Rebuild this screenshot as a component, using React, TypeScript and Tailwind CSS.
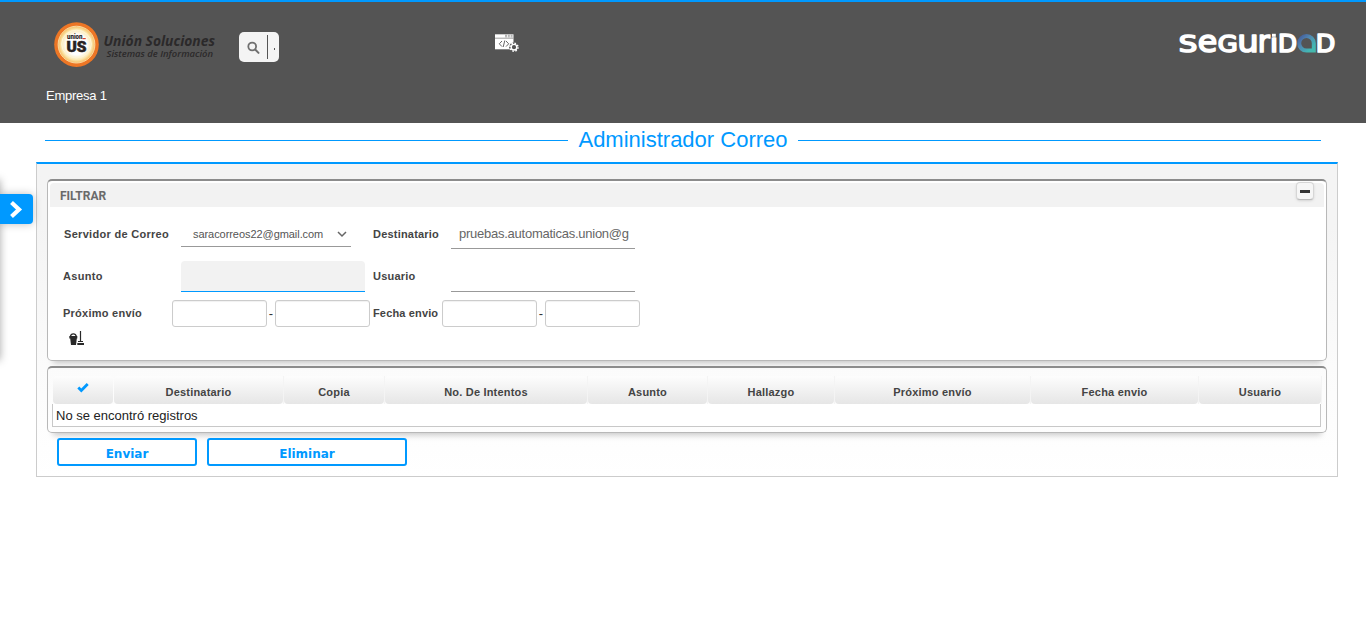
import type { ReactNode } from "react";

const columns = [
  { label: "Destinatario", width: "w-[170px]" },
  { label: "Copia", width: "w-[101px]" },
  { label: "No. De Intentos", width: "w-[203px]" },
  { label: "Asunto", width: "w-[120px]" },
  { label: "Hallazgo", width: "w-[127px]" },
  { label: "Próximo envío", width: "w-[196px]" },
  { label: "Fecha envio", width: "w-[168px]" },
  { label: "Usuario", width: "w-[123px]" },
];

const seguridad = [
  { c: "S", x: 0.8, w: 18.5, size: 23.5 },
  { c: "e", x: 19.8, w: 19.5, size: 30 },
  { c: "G", x: 39.7, w: 20, size: 23.5 },
  { c: "u", x: 59.3, w: 21.5, size: 31 },
  { c: "r", x: 79.8, w: 12, size: 31 },
  { c: "ı", x: 92, w: 8, size: 24 },
  { c: "D", x: 100, w: 19, size: 24 },
  { c: "D", x: 137.7, w: 19.5, size: 24 },
];

function UnionLogo() {
  return (
    <svg width="166" height="48" viewBox="0 0 166 48" className="block">
      <defs>
        <radialGradient id="sun">
          <stop offset="55%" stopColor="#fff" />
          <stop offset="82%" stopColor="#fbe9b4" />
          <stop offset="100%" stopColor="#f6bd5e" />
        </radialGradient>
      </defs>
      <circle cx="24.5" cy="23.6" r="22.3" fill="#ed7625" />
      <circle cx="24.5" cy="23.6" r="18.4" fill="url(#sun)" stroke="#fbd9a2" strokeWidth="1" />
      <ellipse cx="24.5" cy="23" rx="14.8" ry="13.8" fill="none" stroke="#fff6d8" strokeWidth="1" />
      <text x="15" y="18" fontFamily="Roboto, sans-serif" fontWeight="900" fontSize="7.5" textLength="15.5" lengthAdjust="spacingAndGlyphs" fill="#282222">union</text>
      <rect x="30.5" y="17" width="3.2" height="1.2" fill="#d8422f" />
      <text x="14.5" y="30.5" fontFamily="Roboto, sans-serif" fontWeight="900" fontSize="14" textLength="20" lengthAdjust="spacingAndGlyphs" fill="#282222" stroke="#282222" strokeWidth="0.5">US</text>
      <text x="51.5" y="24.5" fontFamily="'Open Sans', sans-serif" fontStyle="italic" fontWeight="700" fontSize="13.5" textLength="111.5" lengthAdjust="spacingAndGlyphs" fill="#2b292a">Unión Soluciones</text>
      <text x="54.5" y="36" fontFamily="'Open Sans', sans-serif" fontStyle="italic" fontWeight="600" fontSize="9.5" textLength="106.5" lengthAdjust="spacingAndGlyphs" fill="#2b292a">Sistemas de Información</text>
    </svg>
  );
}

function SeguridadLogo() {
  return (
    <svg width="158" height="46" viewBox="0 -12 158 46" className="block">
      <defs>
        <linearGradient id="drop" x1="0" y1="0" x2="1" y2="1">
          <stop offset="0" stopColor="#3d4d94" />
          <stop offset="0.4" stopColor="#5185b0" />
          <stop offset="0.75" stopColor="#43b5b3" />
          <stop offset="1" stopColor="#45bba9" />
        </linearGradient>
      </defs>
      {seguridad.map((g) => (
        <text key={g.x} x={g.x} y="20.9" fontFamily="'DejaVu Sans', sans-serif" fontSize={g.size} textLength={g.w} lengthAdjust="spacingAndGlyphs" fill="#fff" stroke="#fff" strokeWidth="1.7" strokeLinejoin="round">
          {g.c}
        </text>
      ))}
      <rect x="94" y="2.8" width="3.8" height="3" fill="#fff" />
      <path fillRule="evenodd" fill="url(#drop)" d="M128.500 3a9.300 9.300 0 0 0 0 18.600h9.300v-9.300a9.300 9.300 0 0 0-9.300-9.300M128.500 7a5.300 5.300 0 0 1 5.300 5.300v5.300h-5.300a5.300 5.300 0 0 1 0-10.600" />
    </svg>
  );
}

function CodeIcon() {
  return (
    <svg width="25" height="19" viewBox="0 0 25 19" className="block">
      <path d="M0 .3h18.500v15H0z" fill="#fff" />
      <path d="M0 4.200h18.500" stroke="#888" strokeWidth=".8" />
      <path d="M10 1.300h8M10 2.800h8" stroke="#888" strokeWidth=".8" strokeDasharray="2 .8" />
      <path d="m7 7-2.700 2.800L7 12.600M11 7l2.700 2.800L11 12.600M9.800 6.500 8.200 13" stroke="#666" strokeWidth="1" fill="none" />
      <circle cx="19" cy="13.200" r="4.800" fill="#545454" />
      <circle cx="19" cy="13.200" r="2.800" fill="none" stroke="#fff" strokeWidth="1.400" />
      <circle cx="19" cy="13.200" r="4" fill="none" stroke="#fff" strokeWidth="1.500" strokeDasharray="1.570 1.570" />
    </svg>
  );
}

function Label({ children, className }: { children: ReactNode; className: string }) {
  return <span className={`shrink-0 whitespace-nowrap text-[11px] font-bold leading-4 text-[#444] ${className}`}>{children}</span>;
}

function DateBox({ label }: { label: string }) {
  return <input aria-label={label} className="h-[27px] w-[95px] shrink-0 rounded-[3px] border border-[#ccc] bg-white shadow-[inset_0_1px_1px_rgba(0,0,0,0.06)] outline-none" />;
}

const panel = "mx-[10px] rounded-[5px] border border-t-2 border-[#b8b8b8] border-t-[#8c8c8c] shadow-[0_8px_6px_-6px_rgba(0,0,0,0.22)]";

export default function App() {
  return (
    <div className="relative h-[643px] w-full overflow-hidden bg-white font-['Liberation_Sans',Arial,sans-serif] text-[#333]">
      <header className="h-[123px] border-t-2 border-[#0099ff] bg-[#545454]">
        <div className="flex h-[67px] items-start pl-[52px] pr-[30px] pt-[19px]">
          <UnionLogo />
          <div className="ml-[21px] mt-[11px] flex h-[30px] w-10 items-center rounded-[5px] bg-[#f4f4f4]">
            <svg width="14" height="14" viewBox="0 0 14 14" className="ml-2 mt-px">
              <circle cx="5.2" cy="5.5" r="3.9" fill="none" stroke="#707070" strokeWidth="1.8" />
              <path d="m8.200 8.500 3.300 3.400" stroke="#707070" strokeWidth="2" strokeLinecap="round" />
            </svg>
            <span className="ml-[6px] h-6 w-px bg-[#555]" />
            <span className="ml-[6px] mt-[3px] h-[2px] w-px bg-[#555]" />
          </div>
          <div className="ml-[216px] mt-[13px]"><CodeIcon /></div>
          <div className="ml-auto -mt-[2px] w-[158px]"><SeguridadLogo /></div>
        </div>
        <div className="ml-[46px] mt-[19px] text-[13px] leading-4 tracking-[-0.25px] text-white">Empresa 1</div>
      </header>

      <div className="ml-[45px] flex h-[39px] w-[1276px] items-center pb-[5px]">
        <span className="h-px flex-1 bg-[#0099ff]" />
        <h1 className="mx-[10px] w-[210px] whitespace-nowrap text-center text-[22px] leading-7 text-[#0099ff]">Administrador Correo</h1>
        <span className="h-px flex-1 bg-[#0099ff]" />
      </div>

      <main className="ml-9 h-[315px] w-[1302px] border border-t-2 border-[#ccc] border-t-[#0099ff] bg-linear-to-b from-[#f4f4f4] from-20% via-[#fbfbfb] via-65% to-white pt-[15px]">
        <section className={`${panel} h-[182px] w-[1280px] bg-white pt-[2px]`}>
          <div className="mx-[2px] flex h-6 items-start justify-between rounded-t-[4px] bg-[#f2f2f2] pl-[10px] pr-[10px]">
            <span className="pt-[5px] font-[Roboto,sans-serif] text-[12px] font-bold leading-4 text-[#6a6a6a]">FILTRAR</span>
            <button aria-label="Contraer" className="-mt-px flex h-[18px] w-[18px] items-center justify-center rounded-[4px] border border-[#d6d6d6] border-b-[#bbb] bg-[#f6f6f6] shadow-sm">
              <span className="h-[3px] w-[10px] bg-[#333]" />
            </button>
          </div>
          <div className="flex h-[42px] items-start pt-[14px]">
            <Label className="ml-4 w-[117px] pt-[5px] tracking-[0.3px]">Servidor de Correo</Label>
            <div className="flex h-[26px] w-[170px] items-center border-b border-[#999] pl-3 text-[11px] text-[#555]">
              <span className="pt-[2px] tracking-[-0.06px]">saracorreos22@gmail.com</span>
              <svg width="10" height="7" viewBox="0 0 10 7" className="ml-auto mr-1 mt-px"><path d="m1 1 4 4 4-4" fill="none" stroke="#666" strokeWidth="1.5" /></svg>
            </div>
            <Label className="ml-[22px] w-[78px] pt-[5px] tracking-[0.2px]">Destinatario</Label>
            <div className="h-[28px] w-[184px] overflow-hidden whitespace-nowrap border-b border-[#999] pl-2 text-[13px] leading-[26px] tracking-[-0.25px] text-[#666]">pruebas.automaticas.union@g</div>
          </div>
          <div className="flex h-[43px] items-end">
            <Label className="ml-[15px] w-[118px] pb-2 tracking-[0.3px]">Asunto</Label>
            <div className="h-[31px] w-[184px] rounded-t-[4px] border-b border-[#0099ff] bg-[#f2f2f2]" />
            <Label className="ml-2 w-[78px] pb-2 tracking-[0.2px]">Usuario</Label>
            <div className="h-[31px] w-[184px] border-b border-[#999]" />
          </div>
          <div className="flex h-[35px] items-end text-[13px] leading-[27px]">
            <Label className="ml-[15px] w-[109px] pb-[6px] tracking-[0.25px]">Próximo envío</Label>
            <DateBox label="Próximo envío desde" />
            <span className="w-2 text-center">-</span>
            <DateBox label="Próximo envío hasta" />
            <Label className="ml-[3px] w-[69px] pb-[6px] tracking-[0.15px]">Fecha envio</Label>
            <DateBox label="Fecha envio desde" />
            <span className="w-2 text-center">-</span>
            <DateBox label="Fecha envio hasta" />
          </div>
          <svg width="16" height="16" viewBox="0 0 16 16" className="ml-[21px] mt-[3px] block">
            <path d="M.3 6h8v2.500H7.800L7 15H2l-.8-6.500H.3z" fill="#292929" />
            <path d="M1.500 6.200C2 3 6.700 3 7.200 6.200" fill="none" stroke="#292929" strokeWidth="1.300" />
            <path d="M11.500 1v10M9 11.500h5" fill="none" stroke="#292929" strokeWidth="1.200" />
            <path d="M8.300 13H15v2H8.300z" fill="#292929" />
          </svg>
        </section>

        <section className={`${panel} mt-[5px] h-[67px] w-[1280px] px-1 pt-2`}>
          <div className="flex h-7 w-[1270px] text-center text-[11px] font-bold leading-8 tracking-[0.2px] text-[#444]">
            <div className="mx-px flex w-[60px] shrink-0 justify-center rounded-[4px] bg-linear-to-b from-[#fdfdfd] to-[#e6e6e6] pt-[7px]">
              <svg width="12" height="10" viewBox="0 0 12 10"><path d="m1.300 4.500 3 3L10.700 1" fill="none" stroke="#0099ff" strokeWidth="2.8" /></svg>
            </div>
            {columns.map((c) => (
              <div key={c.label} className={`${c.width} shrink-0 border-r border-[#f4f4f4]`}>
                <div className="h-full rounded-[4px] bg-linear-to-b from-[#fdfdfd] to-[#e6e6e6]">{c.label}</div>
              </div>
            ))}
          </div>
          <div className="h-[23px] w-[1269px] border border-t-0 border-[#c8c8c8] bg-white pl-[3px] text-[13px] leading-[23px] text-[#222]">No se encontró registros</div>
        </section>

        <div className="ml-5 mt-[5px] flex gap-[10px] font-['DejaVu_Sans',sans-serif] text-[12px] font-bold leading-[24px] text-[#0099ff]">
          <button className="h-7 w-[140px] rounded-[3px] border-2 border-[#0099ff] bg-white pt-[2px]">Enviar</button>
          <button className="h-7 w-[200px] rounded-[3px] border-2 border-[#0099ff] bg-white pt-[2px]">Eliminar</button>
        </div>
      </main>

      <div className="absolute -left-[10px] top-[180px] h-[180px] w-[10px] shadow-[0_0_9px_rgba(0,0,0,0.35)]" />
      <button aria-label="Abrir menú" className="absolute left-0 top-[194px] flex h-[30px] w-[33px] items-center rounded-r-[4px] bg-[#0099ff] pl-2 shadow-[0_0_8px_rgba(0,0,0,0.25)]">
        <svg width="16" height="20" viewBox="0 0 16 20"><path d="m3.500 3.500 7.500 7-7.500 7" fill="none" stroke="#fff" strokeWidth="4.2" /></svg>
      </button>
    </div>
  );
}
